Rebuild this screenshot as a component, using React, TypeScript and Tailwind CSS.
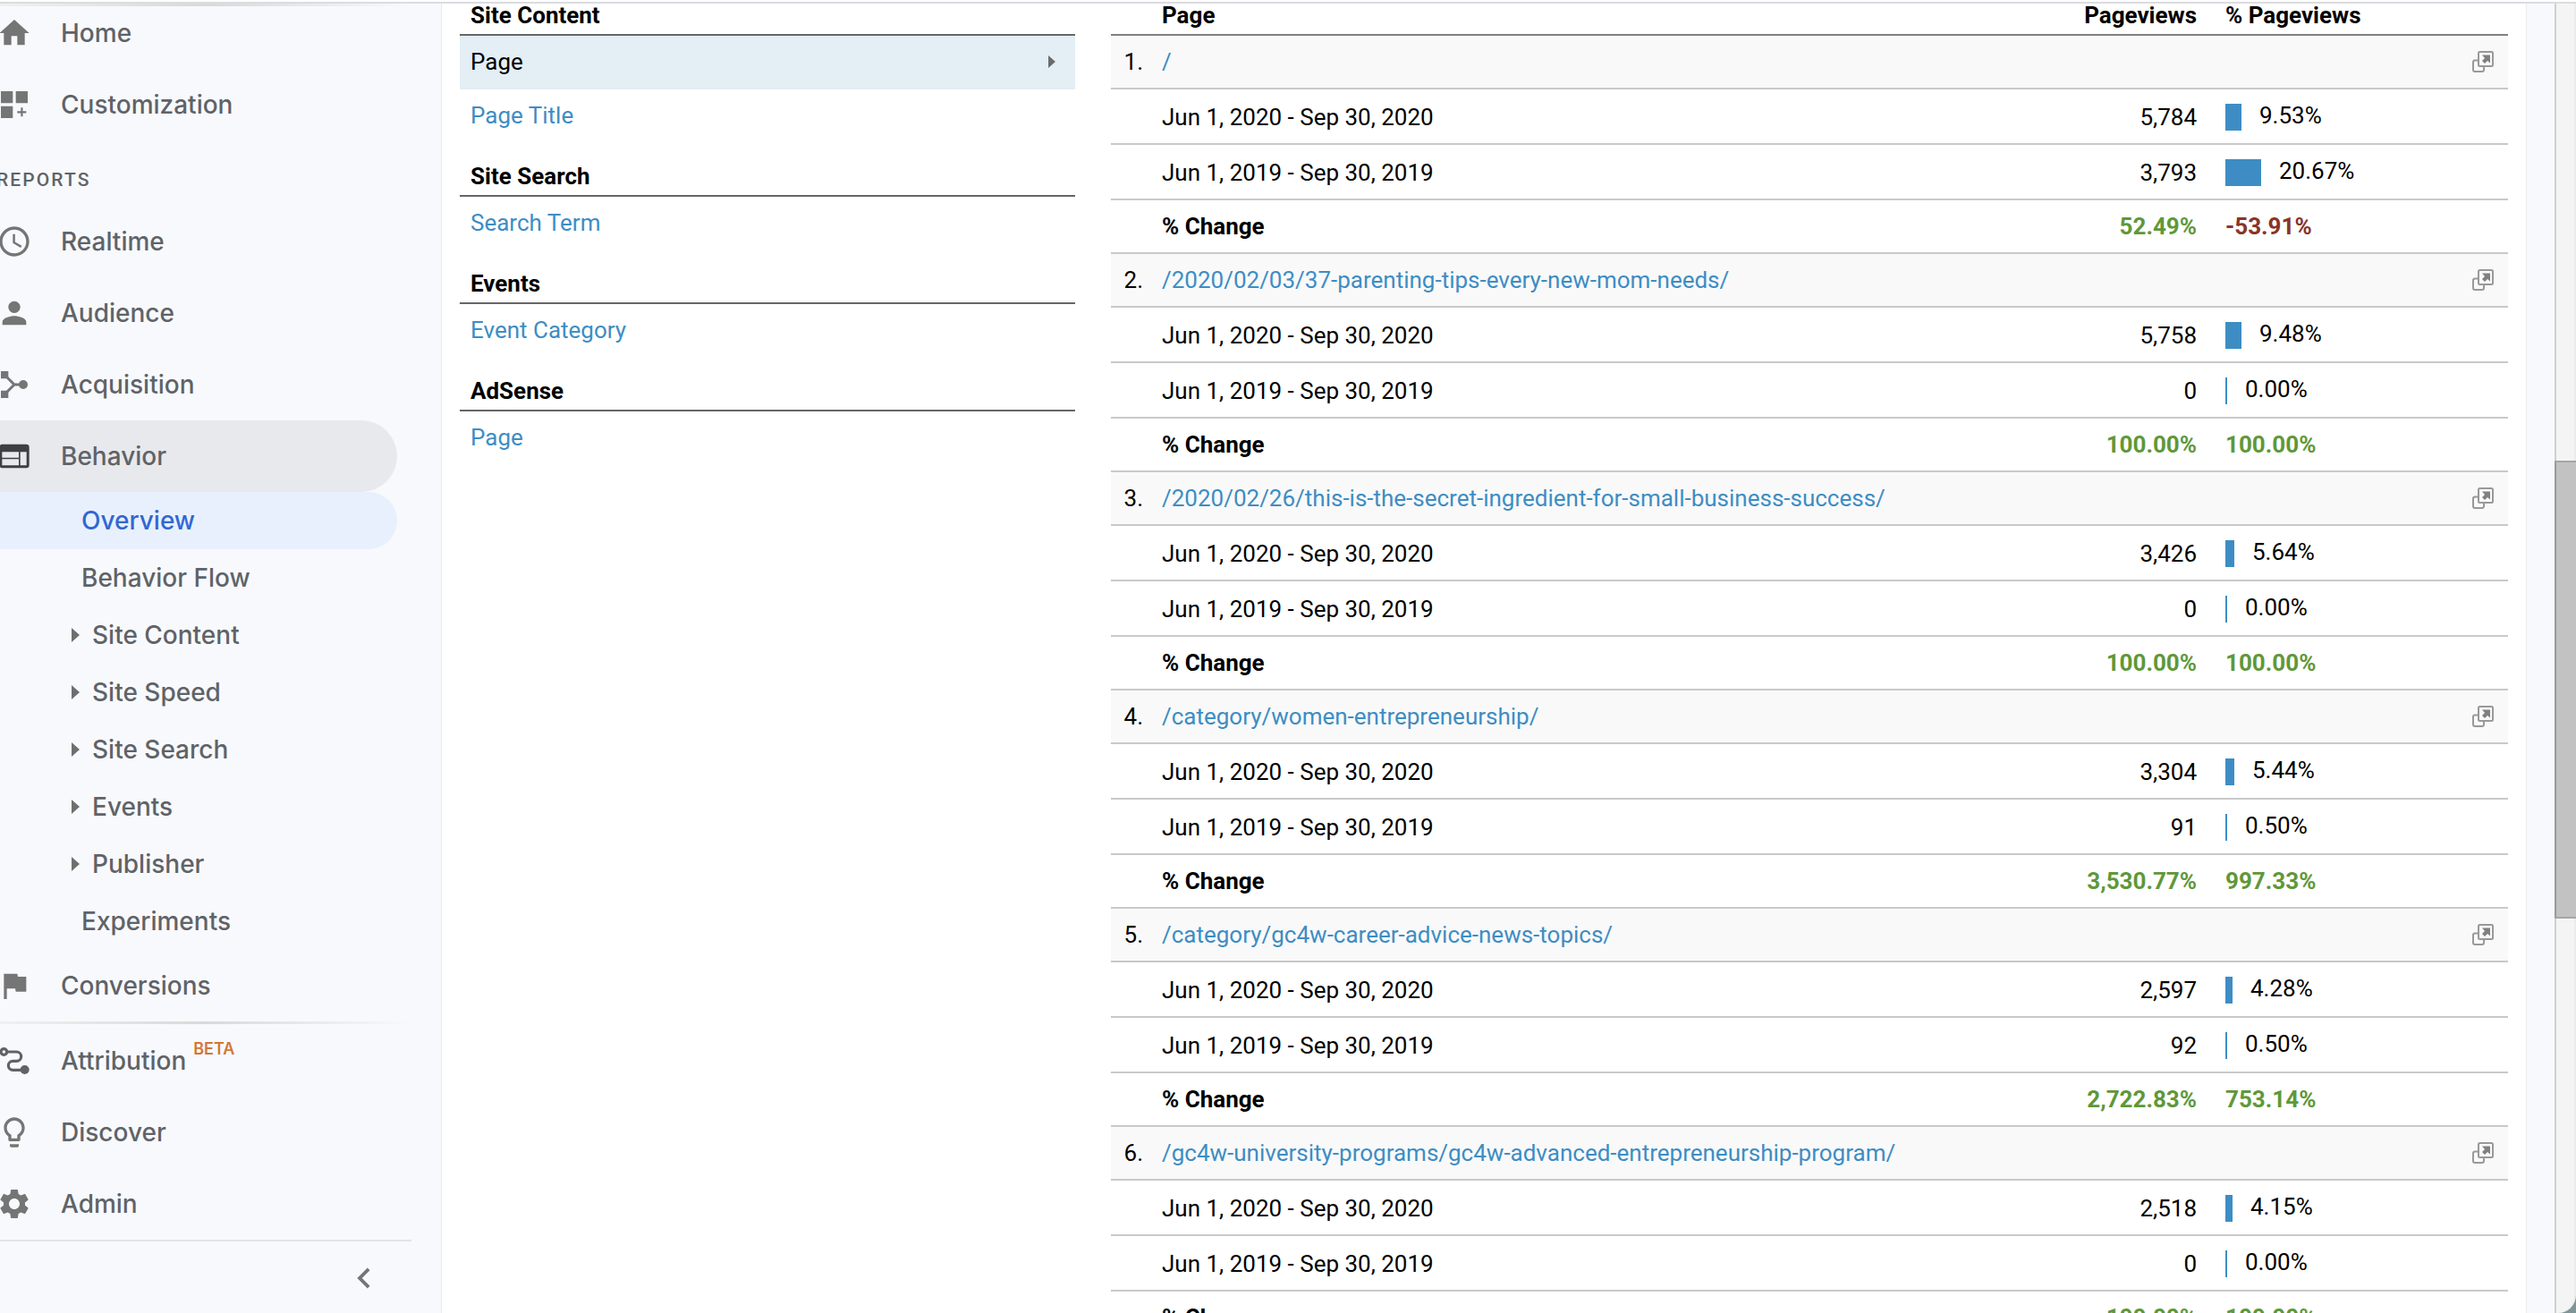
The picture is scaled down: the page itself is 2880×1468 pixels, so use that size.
import React from 'react';
import { MdAccessTime, MdChevronLeft, MdFlag, MdHome, MdLightbulbOutline, MdPerson, MdSettings } from 'react-icons/md';

interface PeriodData {
  pageviews: string;
  percent: number;
}

interface PageRow {
  path: string;
  current: PeriodData;
  previous: PeriodData;
  change: string;
  percentChange: string;
}

const CURRENT_RANGE = 'Jun 1, 2020 - Sep 30, 2020';
const PREVIOUS_RANGE = 'Jun 1, 2019 - Sep 30, 2019';

const rows: PageRow[] = [
  { path: '/', current: { pageviews: '5,784', percent: 9.53 }, previous: { pageviews: '3,793', percent: 20.67 }, change: '52.49%', percentChange: '-53.91%' },
  { path: '/2020/02/03/37-parenting-tips-every-new-mom-needs/', current: { pageviews: '5,758', percent: 9.48 }, previous: { pageviews: '0', percent: 0 }, change: '100.00%', percentChange: '100.00%' },
  { path: '/2020/02/26/this-is-the-secret-ingredient-for-small-business-success/', current: { pageviews: '3,426', percent: 5.64 }, previous: { pageviews: '0', percent: 0 }, change: '100.00%', percentChange: '100.00%' },
  { path: '/category/women-entrepreneurship/', current: { pageviews: '3,304', percent: 5.44 }, previous: { pageviews: '91', percent: 0.5 }, change: '3,530.77%', percentChange: '997.33%' },
  { path: '/category/gc4w-career-advice-news-topics/', current: { pageviews: '2,597', percent: 4.28 }, previous: { pageviews: '92', percent: 0.5 }, change: '2,722.83%', percentChange: '753.14%' },
  { path: '/gc4w-university-programs/gc4w-advanced-entrepreneurship-program/', current: { pageviews: '2,518', percent: 4.15 }, previous: { pageviews: '0', percent: 0 }, change: '100.00%', percentChange: '100.00%' },
];

const dimensionGroups = [
  { title: 'Site Content', items: ['Page', 'Page Title'] },
  { title: 'Site Search', items: ['Search Term'] },
  { title: 'Events', items: ['Event Category'] },
  { title: 'AdSense', items: ['Page'] },
];

const behaviorItems = [
  { label: 'Overview', active: true },
  { label: 'Behavior Flow' },
  { label: 'Site Content', expandable: true },
  { label: 'Site Speed', expandable: true },
  { label: 'Site Search', expandable: true },
  { label: 'Events', expandable: true },
  { label: 'Publisher', expandable: true },
  { label: 'Experiments' },
];

const CustomizationIcon = () => (
  <svg viewBox="0 0 24 24" width="40" height="40" fill="currentColor">
    <path d="M3 3h8v8H3zM13 3h8v8h-8zM3 13h8v8H3zM16.4 14h1.3v2.4H20v1.3h-2.3V20h-1.3v-2.3H14v-1.3h2.4z" />
  </svg>
);

const AcquisitionIcon = () => (
  <svg viewBox="0 0 24 24" width="40" height="40" fill="currentColor">
    <path d="M3 3h5v5H3zM3 16h5v5H3z" />
    <circle cx="18" cy="12" r="3" />
    <path d="M6 6l6 6h5M6 18l6-6" fill="none" stroke="currentColor" strokeWidth="1.8" />
  </svg>
);

const BehaviorIcon = () => (
  <svg viewBox="0 0 24 24" width="40" height="40" fill="#3c4043">
    <path fillRule="evenodd" d="M4 4h16a2 2 0 0 1 2 2v12a2 2 0 0 1-2 2H4a2 2 0 0 1-2-2V6c0-1.1.9-2 2-2zM3.8 9.2v3.9h11.2V9.2zM3.8 13.900v4.300h11.200v-4.300zM16 9.200v9h4.200v-9z" />
  </svg>
);

const AttributionIcon = () => (
  <svg viewBox="0 0 24 24" width="40" height="40" fill="none" stroke="#5f6368" strokeWidth="1.9">
    <circle cx="5" cy="6" r="2" />
    <path d="M7 6h6.500a3.100 3.100 0 0 1 0 6.200h-2.500a3 3 0 0 0 0 6H19" />
    <circle cx="19" cy="18" r="3" fill="#5f6368" stroke="none" />
  </svg>
);

const OpenPageIcon = () => (
  <svg viewBox="0 0 24 24" width="24" height="24" fill="none" stroke="#999" strokeWidth="2">
    <path d="M6.5 10.5H3a2 2 0 0 0-2 2V21a2 2 0 0 0 2 2h8a2 2 0 0 0 2-2v-3" />
    <rect x="7" y="1" width="16" height="16" rx="1.5" />
    <path d="M11 4.5h9v9l-3-2.500-3 3-3-3 3-3z" fill="#808080" stroke="none" />
  </svg>
);

const Triangle = ({ className }: { className: string }) => (
  <svg viewBox="0 0 9 16" className={className} fill="currentColor">
    <path d="M0 0l9 8-9 8z" />
  </svg>
);

interface NavItemProps {
  icon: React.ReactNode;
  label: string;
  active?: boolean;
  badge?: string;
}

const NavItem: React.FC<NavItemProps> = ({ icon, label, active, badge }) => (
  <a href="#" className={`flex h-20 items-center gap-8 rounded-r-full ${active ? 'bg-[#e8e9ed]' : ''}`}>
    <span className="text-[#757575]">{icon}</span>
    <span className="flex">
      {label}
      {badge && <sup className="top-0 -mt-1.5 ml-2 self-start text-lg leading-none font-semibold text-[#d27735]">{badge}</sup>}
    </span>
  </a>
);

const Sidebar = () => (
  <aside className="w-[494px] shrink-0 overflow-hidden border-r border-[#e8eaed] bg-[#f8f9fc] font-['Inter',sans-serif] text-[28px] font-medium text-[#5f6368]">
    <div className="h-[3px] w-[460px] bg-linear-to-r from-[#f0f0f0] via-[#d9d9d9] to-transparent" />
    <nav className="-mt-2.5 -ml-1 w-[448px]">
      <NavItem icon={<MdHome size={40} />} label="Home" />
      <NavItem icon={<CustomizationIcon />} label="Customization" />
      <h2 className="pt-7 pb-3 font-['Roboto',sans-serif] text-[21px] leading-[33px] font-medium tracking-widest">REPORTS</h2>
      <NavItem icon={<MdAccessTime size={40} />} label="Realtime" />
      <NavItem icon={<MdPerson size={40} />} label="Audience" />
      <NavItem icon={<AcquisitionIcon />} label="Acquisition" />
      <NavItem icon={<BehaviorIcon />} label="Behavior" active />
      <ul>
        {behaviorItems.map((item) => (
          <li key={item.label}>
            <a
              href="#"
              className={`flex h-16 items-center rounded-r-full ${item.expandable ? 'gap-3.5 pl-[84px]' : 'pl-[95px]'} ${item.active ? 'bg-[#e8f0fe] text-[#3068d0]' : ''}`}
            >
              {item.expandable && <Triangle className="h-4 w-[9px] text-[#6f6f6f]" />}
              {item.label}
            </a>
          </li>
        ))}
      </ul>
      <NavItem icon={<MdFlag size={40} />} label="Conversions" />
    </nav>
    <div className="h-[3px] w-[460px] bg-linear-to-r from-[#f0f0f0] via-[#d9d9d9] to-transparent" />
    <nav className="mt-px -ml-1 w-[448px]">
      <NavItem icon={<AttributionIcon />} label="Attribution" badge="BETA" />
      <NavItem icon={<MdLightbulbOutline size={40} />} label="Discover" />
      <NavItem icon={<MdSettings size={40} />} label="Admin" />
    </nav>
    <div className="flex h-20 w-[460px] items-center justify-end border-t-2 border-[#e3e4e6] pr-[30px]">
      <button type="button" aria-label="Collapse navigation" className="mt-1 text-[#757575]">
        <MdChevronLeft size={46} />
      </button>
    </div>
  </aside>
);

const DimensionList = () => (
  <div className="w-[688px] shrink-0">
    {dimensionGroups.map((group, groupIndex) => (
      <section key={group.title}>
        <h3 className={`flex items-center border-b-2 border-[#666] px-3 font-bold ${groupIndex === 0 ? 'h-9 pb-2' : 'h-[60px] pt-4'}`}>{group.title}</h3>
        <ul>
          {group.items.map((item, itemIndex) => {
            const selected = groupIndex === 0 && itemIndex === 0;
            return (
              <li key={item}>
                <a href="#" className={`flex h-[60px] items-center justify-between px-3 pb-0.5 ${selected ? 'bg-[#e3eef5] text-black' : 'text-[#3d8dc4]'}`}>
                  {item}
                  {selected && <Triangle className="mr-2.5 h-3.5 w-2 text-[#6b6b6b]" />}
                </a>
              </li>
            );
          })}
        </ul>
      </section>
    ))}
  </div>
);

const PeriodRow = ({ label, data }: { label: string; data: PeriodData }) => {
  const barWidth = Math.max(2, Math.floor(data.percent * 0.97) * 2);

  return (
    <tr className="h-[62px] *:border-b-2 *:border-[#c9c9c9]">
      <td />
      <td className="pt-0.5">{label}</td>
      <td className="pt-0.5 text-right">{data.pageviews}</td>
      <td className="pt-0.5 pl-8">
        <div className="flex items-center gap-5">
          <div className="h-[30px] bg-[#3d8dc4]" style={{ width: barWidth }} />
          <span className="pb-1 leading-6">{data.percent.toFixed(2)}%</span>
        </div>
      </td>
    </tr>
  );
};

const PagesTable = () => (
  <table className="min-w-0 flex-1 table-fixed border-separate border-spacing-0">
    <colgroup>
      <col className="w-[57px]" />
      <col />
      <col className="w-[280px]" />
      <col className="w-[348px]" />
    </colgroup>
    <thead>
      <tr className="h-9 font-bold *:border-b-2 *:border-[#808080]">
        <th />
        <th className="pb-2 text-left leading-6">Page</th>
        <th className="pb-2 text-right leading-6">Pageviews</th>
        <th className="pb-2 pl-8 text-left leading-6">% Pageviews</th>
      </tr>
    </thead>
    {rows.map((row, index) => (
      <tbody key={row.path}>
        <tr className="h-[60px] bg-[#f9f9f9] *:border-b-2 *:border-[#c9c9c9]">
          <td className="pr-[21px] text-right">{index + 1}.</td>
          <td colSpan={2}>
            <a href="#" className="text-[#3d8dc4]">{row.path}</a>
          </td>
          <td className="pr-4">
            <a href="#" aria-label={`Open ${row.path}`} className="ml-auto block w-6">
              <OpenPageIcon />
            </a>
          </td>
        </tr>
        <PeriodRow label={CURRENT_RANGE} data={row.current} />
        <PeriodRow label={PREVIOUS_RANGE} data={row.previous} />
        <tr className="h-[60px] font-bold text-[#5f9839] *:border-b-2 *:border-[#c9c9c9]">
          <td />
          <td className="text-black">% Change</td>
          <td className="text-right">{row.change}</td>
          <td className={`pl-8 ${row.percentChange.startsWith('-') ? 'text-[#8a3426]' : ''}`}>{row.percentChange}</td>
        </tr>
      </tbody>
    ))}
  </table>
);

const Scrollbar = () => (
  <div className="flex w-6 shrink-0 flex-col overflow-hidden bg-[#7f9696]">
    <div className="flex flex-1 flex-col rounded-br-[20px] border-r-2 border-l-2 border-r-[#ebebeb] border-l-[#cfcfcf] bg-[#f4f4f4]">
      <div className="flex-[512]" />
      <div className="-mx-0.5 flex-[510] border-2 border-r-0 border-[#a6a6a6] border-l-[#999] bg-[#c2c2c2]" />
      <div className="flex-[442]" />
    </div>
  </div>
);

const App = () => (
  <div className="flex h-screen flex-col overflow-hidden bg-white pt-0.5 font-['Roboto',sans-serif] text-[26px] leading-8 text-black">
    <div className="flex min-h-0 flex-1 border-t-2 border-[#dadce0]">
      <Sidebar />
      <main className="flex min-w-0 flex-1">
        <div className="flex min-w-0 flex-1 items-start gap-10 px-5">
          <DimensionList />
          <PagesTable />
        </div>
        <div className="w-8 shrink-0 border-l border-[#ebebeb] bg-[#f8f9fc]" />
      </main>
      <Scrollbar />
    </div>
  </div>
);

export default App;
